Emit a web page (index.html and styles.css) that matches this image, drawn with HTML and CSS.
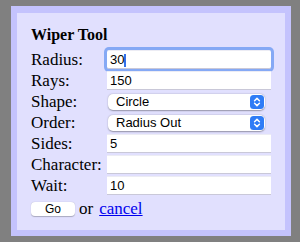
FILE: index.html
```html
<!DOCTYPE html>
<html lang="en">
<head>
  <meta charset="UTF-8" />
  <title>Wiper Tool</title>
  <link rel="stylesheet" href="styles.css">
</head>
<body>
  <div class="panel">
    <div class="panel-inner">
      <div class="title">Wiper Tool</div>
      <form class="tool-form" onsubmit="return false">
        <label class="row-label" for="radius">Radius:</label>
        <input class="field focused" type="text" id="radius" value="30">

        <label class="row-label" for="rays">Rays:</label>
        <input class="field" type="text" id="rays" value="150">

        <label class="row-label" for="shape">Shape:</label>
        <select class="picker" id="shape">
          <option>Circle</option>
          <option>Square</option>
        </select>

        <label class="row-label" for="order">Order:</label>
        <select class="picker" id="order">
          <option>Radius Out</option>
          <option>Radius In</option>
        </select>

        <label class="row-label" for="sides">Sides:</label>
        <input class="field" type="text" id="sides" value="5">

        <label class="row-label" for="character">Character:</label>
        <input class="field" type="text" id="character" value="">

        <label class="row-label" for="wait">Wait:</label>
        <input class="field" type="text" id="wait" value="10">
      </form>
      <div class="actions">
        <button class="go-btn" type="button">Go</button>
        <span class="or">or</span>
        <a class="cancel" href="#">cancel</a>
      </div>
    </div>
  </div>
</body>
</html>
```

FILE: styles.css
```css
html, body {
  margin: 0;
  background: #808080;
}
body {
  padding: 6px 9px 6px 11px;
  font-family: "Liberation Serif", "Times New Roman", serif;
  color: #000;
}
.panel {
  width: 280px;
  box-sizing: border-box;
  border-style: solid;
  border-color: #c4c3fd;
  border-width: 7px 6px 6px 6px;
  background: #e1e0fe;
}
.panel-inner {
  padding: 12px 14px 10px 14px;
}
.title {
  font-size: 16px;
  font-weight: bold;
  line-height: 19px;
}
.tool-form {
  display: grid;
  grid-template-columns: 76px 164px;
  grid-auto-rows: 21px;
  align-items: center;
  margin: 5px 0 0 0;
}
.row-label {
  font-size: 17px;
  line-height: 19px;
  white-space: nowrap;
}
.field {
  box-sizing: border-box;
  width: 164px;
  height: 19px;
  margin: 0;
  padding: 0 2px 0 3px;
  border: none;
  border-top: 1px solid #ececf4;
  border-bottom: 1px solid #c9c8d8;
  background: #fff;
  font-family: "Liberation Sans", Arial, sans-serif;
  font-size: 13px;
  color: #000;
  outline: none;
}
.field.focused {
  border-radius: 2px;
  box-shadow: 0 0 0 3px #85a9f5;
  background: #fff linear-gradient(#3470e8, #3470e8) no-repeat 17px 3px / 2px 13px;
}
.picker {
  -webkit-appearance: none;
  appearance: none;
  box-sizing: border-box;
  width: 157px;
  height: 16px;
  margin: 0 0 0 1px;
  padding: 0 0 0 8px;
  border: none;
  border-radius: 5px;
  background: #fff url("data:image/svg+xml;utf8,<svg xmlns='http://www.w3.org/2000/svg' width='14' height='14' viewBox='0 0 14 14'><rect width='14' height='14' rx='3.5' fill='%232f7cf6'/><path d='M4.6 5.7 7 3.4 9.4 5.7M4.6 8.3 7 10.6 9.4 8.3' fill='none' stroke='white' stroke-width='1.5' stroke-linecap='round' stroke-linejoin='round'/></svg>") no-repeat right 1px center / 14px 14px;
  box-shadow: 0 0.5px 1.5px rgba(0, 0, 0, 0.35);
  font-family: "Liberation Sans", Arial, sans-serif;
  font-size: 13px;
  line-height: 16px;
  color: #000;
  outline: none;
}
.actions {
  display: flex;
  align-items: center;
  height: 22px;
  margin-top: 2px;
}
.go-btn {
  width: 44px;
  height: 14px;
  margin: 0 4px 0 0;
  padding: 0;
  border: none;
  border-radius: 4px;
  background: #fff;
  box-shadow: 0 0.5px 1px rgba(0, 0, 0, 0.25);
  font-family: "Liberation Sans", Arial, sans-serif;
  font-size: 12px;
  line-height: 14px;
  color: #000;
}
.or {
  font-size: 17px;
  margin-right: 6px;
}
.cancel {
  font-size: 17px;
  color: #0000ee;
  text-decoration: underline;
}
```
